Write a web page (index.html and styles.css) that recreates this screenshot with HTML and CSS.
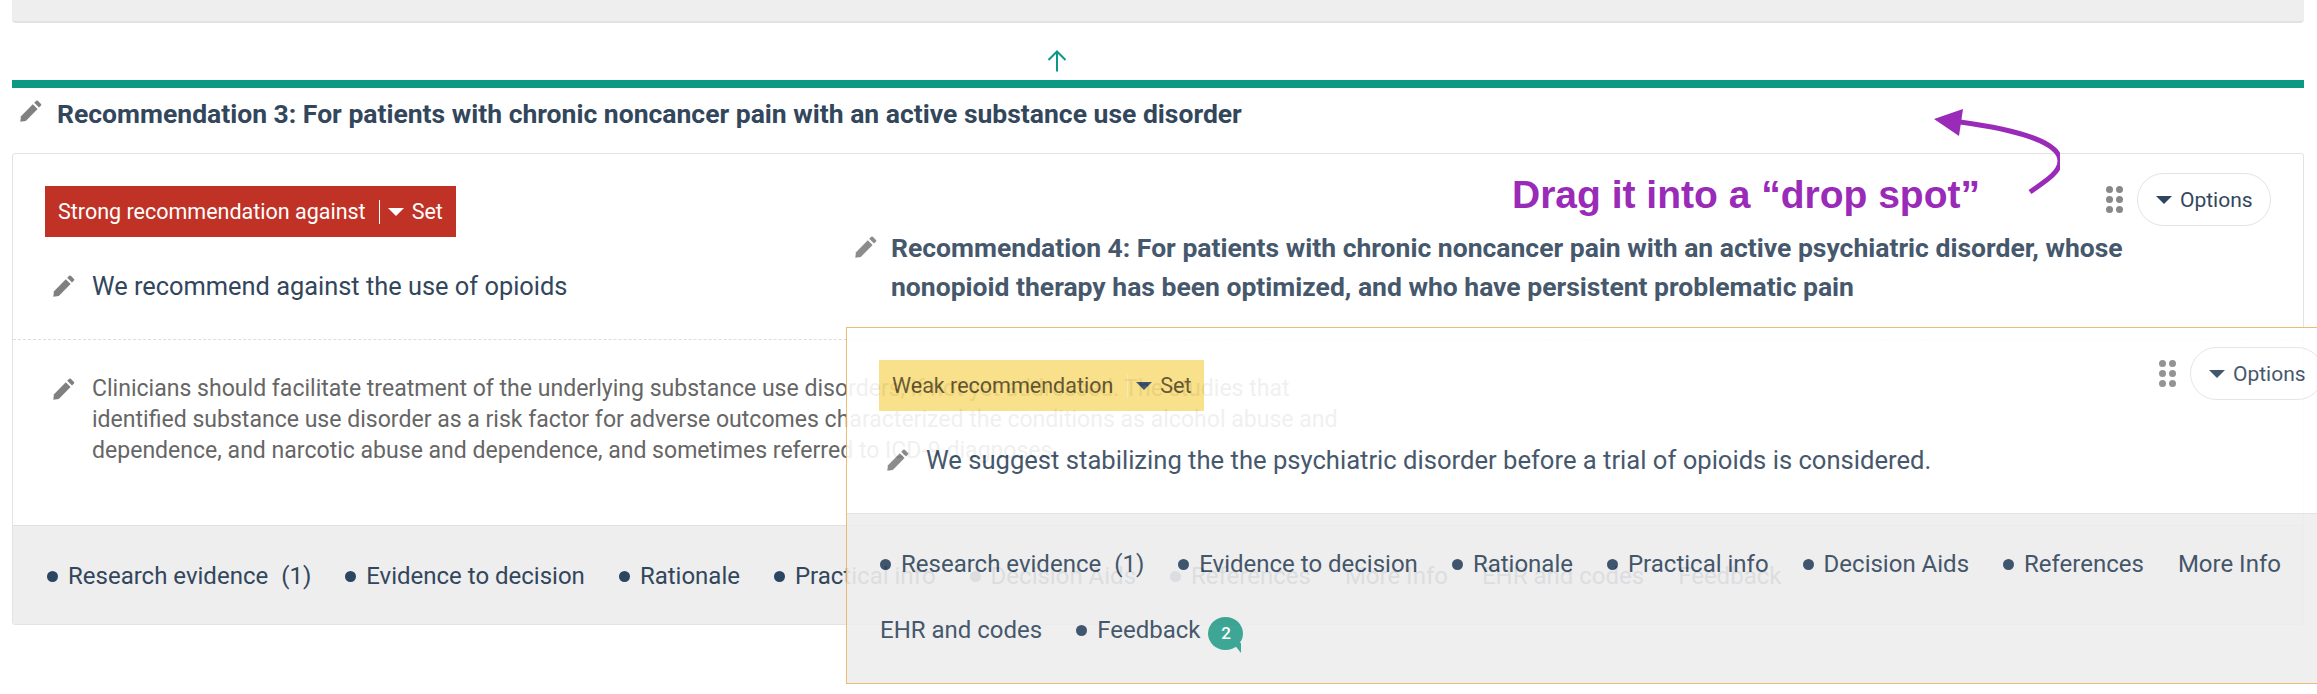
FILE: index.html
```html
<!DOCTYPE html>
<html lang="en">
<head>
<meta charset="utf-8">
<title>Recommendations</title>
<link rel="stylesheet" href="styles.css">
</head>
<body>
<svg class="defs" width="0" height="0" aria-hidden="true">
  <symbol id="pencil" viewBox="0 0 22 22">
    <path d="M0.3 21.7 L1 16.2 L12.8 4.2 L17.6 9 L5.8 20.9 Z"/>
    <path d="M14.2 2.8 L16.2 0.8 Q17 0 17.8 0.8 L21 4 Q21.8 4.8 21 5.6 L19 7.6 Z"/>
  </symbol>
</svg>

<main class="page">
  <div class="prev-card"></div>
  <div class="drop-hint">
    <svg class="up-arrow" width="20" height="22" viewBox="0 0 20 22"><path d="M10 21.5 V1.5 M1.5 10 L10 1.5 L18.5 10"/></svg>
  </div>
  <div class="drop-line"></div>

  <div class="heading">
    <svg class="pencil"><use href="#pencil"/></svg>
    <h2 class="heading-text">Recommendation 3: For patients with chronic noncancer pain with an active substance use disorder</h2>
  </div>

  <section class="card">
    <div class="card-top">
      <div class="badge badge-red">
        <span>Strong recommendation against</span><i class="badge-sep"></i><i class="caret caret-white"></i><span>Set</span>
      </div>
      <div class="controls">
        <div class="grip"><i></i><i></i><i></i><i></i><i></i><i></i></div>
        <button class="options"><i class="caret"></i>Options</button>
      </div>
    </div>
    <div class="statement">
      <svg class="pencil"><use href="#pencil"/></svg>
      <p>We recommend against the use of opioids</p>
    </div>
    <div class="remark">
      <svg class="pencil"><use href="#pencil"/></svg>
      <p>Clinicians should facilitate treatment of the underlying substance use disorders, if not yet addressed. The studies that identified substance use disorder as a risk factor for adverse outcomes characterized the conditions as alcohol abuse and dependence, and narcotic abuse and dependence, and sometimes referred to ICD-9 diagnoses.</p>
    </div>
    <nav class="tabs">
      <span class="tab dot">Research evidence<span class="count">(1)</span></span>
      <span class="tab dot">Evidence to decision</span>
      <span class="tab dot">Rationale</span>
      <span class="tab dot">Practical info</span>
      <span class="tab dot">Decision Aids</span>
      <span class="tab dot">References</span>
      <span class="tab">More Info</span>
      <span class="tab">EHR and codes</span>
      <span class="tab">Feedback</span>
    </nav>
  </section>
</main>

<aside class="ghost">
  <div class="ghost-heading">
    <svg class="pencil"><use href="#pencil"/></svg>
    <h2 class="ghost-title">Recommendation 4: For patients with chronic noncancer pain with an active psychiatric disorder, whose nonopioid therapy has been optimized, and who have persistent problematic pain</h2>
  </div>
  <section class="ghost-card">
    <div class="card-top ghost-top">
      <div class="badge badge-yellow">
        <span>Weak recommendation</span><i class="badge-sep"></i><i class="caret"></i><span>Set</span>
      </div>
      <div class="controls">
        <div class="grip"><i></i><i></i><i></i><i></i><i></i><i></i></div>
        <button class="options"><i class="caret"></i>Options</button>
      </div>
    </div>
    <div class="statement ghost-statement">
      <svg class="pencil"><use href="#pencil"/></svg>
      <p>We suggest stabilizing the the psychiatric disorder before a trial of opioids is considered.</p>
    </div>
    <nav class="tabs ghost-tabs">
      <span class="tab dot">Research evidence<span class="count">(1)</span></span>
      <span class="tab dot">Evidence to decision</span>
      <span class="tab dot">Rationale</span>
      <span class="tab dot">Practical info</span>
      <span class="tab dot">Decision Aids</span>
      <span class="tab dot">References</span>
      <span class="tab">More Info</span>
      <span class="tab">EHR and codes</span>
      <span class="tab dot">Feedback<span class="bubble">2</span></span>
    </nav>
  </section>
</aside>

<div class="note">Drag it into a “drop spot”</div>
<svg class="note-arrow" width="140" height="90" viewBox="0 0 140 90">
  <path class="note-shaft" d="M110 83 C124 73 140 64 140 52 C140 32 92 20 40 13"/>
  <path class="note-head" d="M14 10 L43 0 L39 27 Z"/>
</svg>
</body>
</html>
```
FILE: styles.css
```css
* { box-sizing: border-box; }
html, body { margin: 0; padding: 0; overflow: hidden; height: 694px; background: #fff; }
body { position: relative; font-family: Roboto, "Liberation Sans", sans-serif; color: #32465c; }
.defs { position: absolute; }
p, h2 { margin: 0; }
i { display: block; font-style: normal; }

.page { width: 2304px; padding-left: 12px; }
.prev-card { height: 23px; background: #eee; border-bottom: 2px solid #e2e2e2; border-radius: 0 0 4px 4px; }
.drop-hint { height: 57px; padding: 27px 0 0 1035px; }
.up-arrow { display: block; fill: none; stroke: #0b9885; stroke-width: 2; }
.drop-line { height: 8px; background: #0b9885; }

.pencil { display: block; width: 22px; height: 22px; fill: #808080; flex: none; }
.heading { display: flex; align-items: center; gap: 15px; height: 65px; padding: 0 0 13px 8px; }
.heading .pencil { margin-top: -6px; }
.heading-text { font-size: 26.5px; font-weight: 700; line-height: 40px; color: #32465c; }

.card { height: 472px; border: 1px solid #e3e3e3; border-radius: 3px; display: flex; flex-direction: column; }
.card-top { display: flex; justify-content: space-between; align-items: flex-start; padding: 19px 32px 0; height: 93px; }
.badge { display: flex; align-items: center; height: 51px; padding: 0 13px; font-size: 21.5px; margin-top: 13px; }
.badge-red { background: #c03225; color: #fff; }
.badge-yellow { background: #f8de7e; color: #5a4a22; }
.badge-sep { width: 1px; height: 24px; background: #fff; margin: 0 8px 0 13px; }
.badge-yellow .badge-sep { background: #f1e7b8; margin-left: 14px; }
.caret { width: 0; height: 0; border-left: 8px solid transparent; border-right: 8px solid transparent; border-top: 8px solid #2c4560; margin-right: 8px; }
.caret-white { border-top-color: #fff; }

.controls { display: flex; align-items: center; gap: 14px; }
.grip { display: grid; grid-template-columns: 7px 7px; gap: 3px; width: 17px; }
.grip i { width: 7px; height: 7px; border-radius: 50%; background: #888; }
.options { display: flex; align-items: center; width: 134px; height: 53px; padding: 0 0 0 18px; background: #fff; border: 1px solid #e3e3e3; border-radius: 27px; font: 21px Roboto, sans-serif; color: #32465c; }

.statement { display: flex; align-items: center; gap: 17px; padding: 0 0 14px 40px; height: 92px; font-size: 25.4px; }
.remark { display: flex; align-items: flex-start; gap: 17px; padding: 33px 0 0 40px; height: 186px; border-top: 1px dashed #ddd; font-size: 23.05px; line-height: 31px; color: #666; }
.remark .pencil { margin-top: 5px; }
.remark p { max-width: 1262px; }
.tabs { flex: 1; display: flex; align-items: center; padding: 2px 0 0 34px; background: #eee; border-top: 1px solid #e0e0e0; font-size: 24px; white-space: nowrap; }
.tab { display: flex; align-items: center; margin-right: 34px; }
.tab.dot::before { content: ""; width: 11px; height: 11px; border-radius: 50%; background: #2c4560; margin-right: 10px; }
.count { margin-left: 13px; }

.ghost { position: absolute; left: 846px; top: 228px; width: 1480px; opacity: .9; }
.ghost-heading { display: flex; gap: 14px; padding: 0 0 0 9px; height: 99px; }
.ghost-heading .pencil { margin-top: 8px; }
.ghost-title { max-width: 1260px; font-size: 26.5px; font-weight: 700; line-height: 39px; color: #32465c; }
.ghost-card { height: 357px; background: #fff; border: 1px solid #e8b566; border-right: 0; display: flex; flex-direction: column; }
.ghost-top { padding: 19px 2px 0 32px; height: 86px; }
.ghost-statement { height: 99px; padding-bottom: 7px; font-size: 25.6px; }
.ghost-tabs { flex-wrap: wrap; align-content: flex-start; padding: 17px 0 0 33px; }
.ghost-tabs .tab { height: 66px; }
.bubble { position: relative; display: flex; align-items: center; justify-content: center; width: 35px; height: 33px; margin-left: 8px; margin-top: 6px; border-radius: 50%; background: #2a9d8a; color: #fff; font-size: 17px; font-weight: 500; }
.bubble::after { content: ""; position: absolute; right: 2px; bottom: -3px; width: 0; height: 0; border-left: 8px solid transparent; border-top: 10px solid #2a9d8a; }

.note { position: absolute; left: 1512px; top: 172px; font: 700 39px/46px "Liberation Sans", Arial, sans-serif; color: #9a2ab8; white-space: nowrap; }
.note-arrow { position: absolute; left: 1920px; top: 109px; }
.note-shaft { fill: none; stroke: #9a2ab8; stroke-width: 5; }
.note-head { fill: #9a2ab8; }
```
